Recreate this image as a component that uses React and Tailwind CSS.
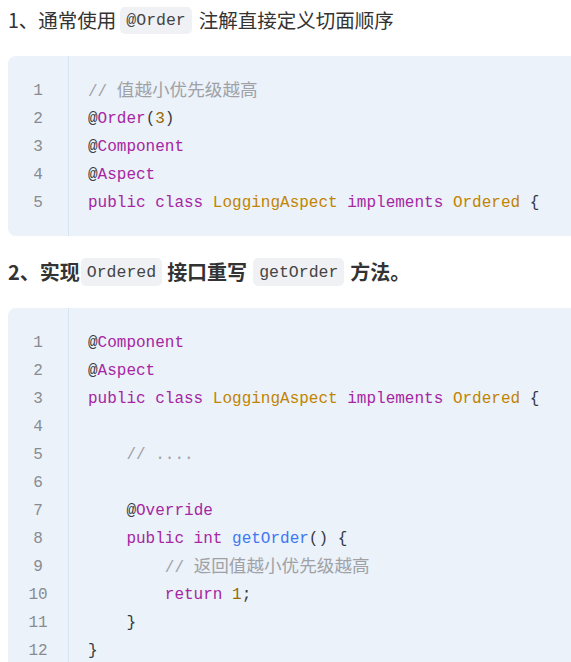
import React from "react";

const C = {
  p: "text-[#383a42]",
  k: "text-[#a626a4]",
  c: "text-[#a0a1a7]",
  cz: "text-[#a0a1a7] text-[17.6px]",
  t: "text-[#c18401]",
  n: "text-[#986801]",
  f: "text-[#4078f2]",
};

const block1 = [
  [["// ", "c"], ["值越小优先级越高", "cz"]],
  [["@", "p"], ["Order", "k"], ["(", "p"], ["3", "n"], [")", "p"]],
  [["@", "p"], ["Component", "k"]],
  [["@", "p"], ["Aspect", "k"]],
  [
    ["public class ", "k"],
    ["LoggingAspect ", "t"],
    ["implements ", "k"],
    ["Ordered ", "t"],
    ["{", "p"],
  ],
];

const block2 = [
  [["@", "p"], ["Component", "k"]],
  [["@", "p"], ["Aspect", "k"]],
  [
    ["public class ", "k"],
    ["LoggingAspect ", "t"],
    ["implements ", "k"],
    ["Ordered ", "t"],
    ["{", "p"],
  ],
  [],
  [["    ", "p"], ["// ....", "c"]],
  [],
  [["    @", "p"], ["Override", "k"]],
  [["    ", "p"], ["public int ", "k"], ["getOrder", "f"], ["() {", "p"]],
  [["        ", "p"], ["// ", "c"], ["返回值越小优先级越高", "cz"]],
  [["        ", "p"], ["return ", "k"], ["1", "n"], [";", "p"]],
  [["    }", "p"]],
  [["}", "p"]],
];

const mono = "font-['Liberation_Mono','Noto_Sans_CJK_SC',monospace]";

const CodeBlock = ({ lines }) => (
  <div className={`flex w-[640px] rounded-[8px] bg-[#ebf2f9] ${mono} text-[16px] leading-[28px]`}>
    <div className="w-[61px] shrink-0 border-r border-[#d5e5f4] pt-[21px] pb-[19px] text-center text-[#888c92]">
      {lines.map((_, i) => (
        <div key={i} className="h-[28px]">{i + 1}</div>
      ))}
    </div>
    <div className="pt-[21px] pb-[19px] pl-[19px] whitespace-pre">
      {lines.map((tokens, i) => (
        <div key={i} className="h-[28px]">
          {tokens.map(([text, kind], j) => (
            <span key={j} className={C[kind]}>
              {text}
            </span>
          ))}
        </div>
      ))}
    </div>
  </div>
);

const Chip = ({ children, className = "" }) => (
  <code
    className={`inline-flex h-[27px] items-center rounded-[5px] bg-[#f0f1f4] px-[6px] pt-[2px] ${mono} text-[16.5px] font-normal text-[#444] ${className}`}
  >
    {children}
  </code>
);

export default function App() {
  return (
    <div className="h-screen w-full overflow-hidden bg-white pl-[8px] font-['Noto_Sans_CJK_SC','Noto_Sans',sans-serif] text-[#333]">
      <div className="flex h-[40px] items-center text-[19.5px] leading-none">
        <span>1、通常使用</span>
        <Chip className="ml-[4px] mr-[7px]">@Order</Chip>
        <span>注解直接定义切面顺序</span>
      </div>

      <div className="mt-[16px]">
        <CodeBlock lines={block1} />
      </div>

      <div className="mt-[16px] flex h-[40px] items-center text-[20px] font-bold leading-none">
        <span>2、实现</span>
        <Chip className="ml-[1px] mr-[5px] h-[28px]">Ordered</Chip>
        <span>接口重写</span>
        <Chip className="ml-[6px] mr-[6px] h-[28px]">getOrder</Chip>
        <span>方法。</span>
      </div>

      <div className="mt-[16px]">
        <CodeBlock lines={block2} />
      </div>
    </div>
  );
}
